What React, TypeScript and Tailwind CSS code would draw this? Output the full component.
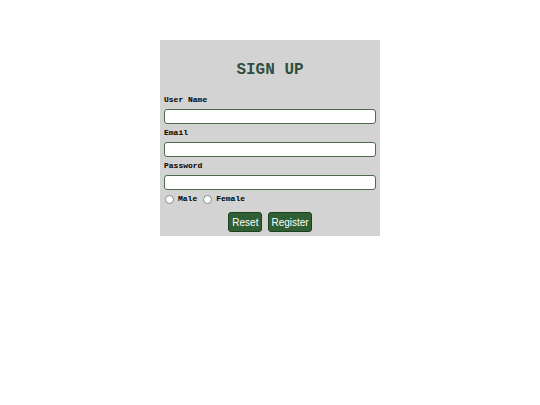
import React from "react";

const mono = { fontFamily: '"Liberation Mono", "Courier New", monospace' };
const sans = { fontFamily: '"Liberation Sans", Arial, sans-serif' };

function Field({ label, type = "text" }: { label: string; type?: string }) {
  return (
    <div className="flex flex-col">
      <label className="mt-[2px] mb-[2px] text-[8px] leading-[14px] font-bold text-black" style={mono}>
        {label}
      </label>
      <input
        type={type}
        className="h-[15px] w-full rounded-[3px] border border-[#4d6b4d] bg-white outline-none"
      />
    </div>
  );
}

export default function App() {
  return (
    <div className="min-h-[405px] w-full bg-white pt-[40px]">
      <form className="mx-auto flex w-[220px] flex-col bg-[#d3d3d3] px-[4px] pb-[4px]">
        <h1
          className="pt-[21px] pb-[12px] text-center text-[16px] leading-[18px] font-bold text-[#2f4f3f]"
          style={mono}
        >
          SIGN UP
        </h1>
        <Field label="User Name" />
        <Field label="Email" type="email" />
        <Field label="Password" type="password" />
        <div className="mt-[4px] flex items-center gap-[4px] text-[8px] leading-[10px] font-bold" style={mono}>
          <span className="ml-[1px] h-[9px] w-[9px] rounded-full border border-[#8a8a8a] bg-white" />
          <span>Male</span>
          <span className="ml-[2px] h-[9px] w-[9px] rounded-full border border-[#8a8a8a] bg-white" />
          <span>Female</span>
        </div>
        <div className="mt-[8px] flex justify-center gap-[6px]">
          <button
            type="reset"
            className="h-[20px] rounded-[3px] border border-[#1f3f20] bg-[#2f5f32] px-[3px] text-[10px] text-white"
            style={sans}
          >
            Reset
          </button>
          <button
            type="button"
            className="h-[20px] rounded-[3px] border border-[#1f3f20] bg-[#2f5f32] px-[2px] text-[10px] text-white"
            style={sans}
          >
            Register
          </button>
        </div>
      </form>
    </div>
  );
}
